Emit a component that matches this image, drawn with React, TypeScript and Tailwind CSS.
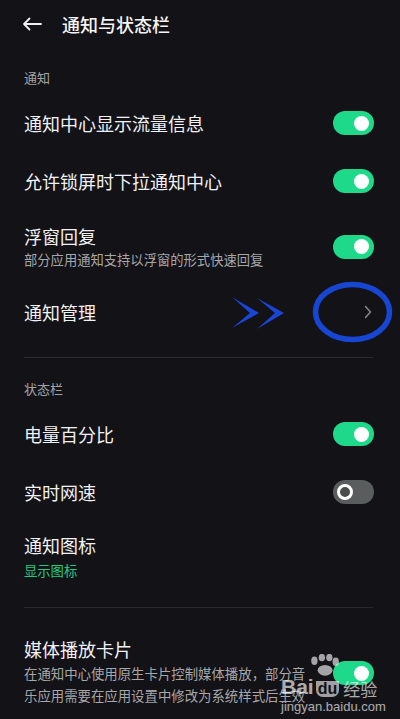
import React from "react";

const font = { fontFamily: '"Noto Sans CJK SC", "Noto Sans", sans-serif' };

function Toggle({ on }: { on: boolean }) {
  if (on) {
    return (
      <div className="w-[41px] h-[24px] rounded-full bg-[#1fd98a] flex items-center justify-end pr-[5px] shrink-0">
        <div className="w-[15px] h-[15px] rounded-full bg-white" />
      </div>
    );
  }
  return (
    <div className="w-[41px] h-[24px] rounded-full bg-[#5a5d5d] flex items-center pl-[4px] shrink-0">
      <div className="w-[16px] h-[16px] rounded-full border-[3.5px] border-white bg-[#4a4c4c]" />
    </div>
  );
}

function SectionLabel({ text }: { text: string }) {
  return (
    <div className="h-[32px] flex items-center px-[24px] text-[13px] text-[#a3a3a6]">{text}</div>
  );
}

function Row({ title, sub, on }: { title: string; sub?: string; on: boolean }) {
  return (
    <div className={`${sub ? "h-[73px]" : "h-[58px]"} flex items-center justify-between pl-[24px] pr-[26px]`}>
      <div className="flex flex-col">
        <span className="text-[18px] leading-[24px] text-[#f1f1f3]">{title}</span>
        {sub && <span className="mt-[2px] text-[13.3px] leading-[20px] text-[#a7a7aa]">{sub}</span>}
      </div>
      <Toggle on={on} />
    </div>
  );
}

function Divider() {
  return <div className="ml-[24px] mr-[27px] h-px bg-[#2a2a30]" />;
}

export default function App() {
  return (
    <div className="relative w-[400px] h-[719px] overflow-hidden bg-[#131217]" style={font}>
      <div className="h-[48px] flex items-center pl-[22px]">
        <svg width="20" height="14" viewBox="0 0 20 14" fill="none" stroke="#f1f1f3" strokeWidth="1.8" strokeLinecap="round" strokeLinejoin="round">
          <path d="M19 7H2M7.5 1.5L2 7l5.5 5.5" />
        </svg>
        <span className="ml-[20px] text-[18px] font-medium text-[#f4f4f6]">通知与状态栏</span>
      </div>

      <div className="mt-[14px]">
        <SectionLabel text="通知" />
      </div>
      <Row title="通知中心显示流量信息" on />
      <Row title="允许锁屏时下拉通知中心" on />
      <Row title="浮窗回复" sub="部分应用通知支持以浮窗的形式快速回复" on />
      <div className="h-[58px] flex items-center justify-between pl-[24px] pr-[28px]">
        <span className="text-[18px] leading-[24px] text-[#f1f1f3]">通知管理</span>
        <svg width="8" height="14" viewBox="0 0 8 14" fill="none" stroke="#8c8c90" strokeWidth="1.4" strokeLinecap="round" strokeLinejoin="round">
          <path d="M1.5 1.5L6.5 7l-5 5.5" />
        </svg>
      </div>

      <div className="mt-[16px]">
        <Divider />
      </div>
      <div className="mt-[15px]">
        <SectionLabel text="状态栏" />
      </div>
      <Row title="电量百分比" on />
      <Row title="实时网速" on={false} />
      <div className="h-[74px] pt-[12px] pl-[24px] pr-[26px] flex flex-col">
        <span className="text-[18px] leading-[24px] text-[#f1f1f3]">通知图标</span>
        <span className="mt-[4px] text-[13.3px] leading-[20px] text-[#22c983]">显示图标</span>
      </div>

      <div className="mt-[12px]">
        <Divider />
      </div>
      <div className="mt-[28px] flex items-center justify-between pl-[24px] pr-[26px]">
        <div className="flex flex-col w-[290px]">
          <span className="text-[18px] leading-[26px] text-[#f1f1f3]">媒体播放卡片</span>
          <span className="text-[13.4px] leading-[22px] text-[#a7a7aa]">
            在通知中心使用原生卡片控制媒体播放，部分音乐应用需要在应用设置中修改为系统样式后生效
          </span>
        </div>
        <div className="mt-[4px]">
          <Toggle on />
        </div>
      </div>

      {/* annotation overlay */}
      <svg className="absolute left-0 top-0 pointer-events-none" width="400" height="719" viewBox="0 0 400 719">
        <path d="M232 297L259 313L232 328L250 313Z" fill="#1b45d8" />
        <path d="M257 298L284 313L257 329L275 313Z" fill="#1b45d8" />
        <ellipse cx="352.5" cy="312" rx="37" ry="27.5" fill="none" stroke="#1747d2" strokeWidth="5.5" />
      </svg>

      {/* watermark */}
      <div className="absolute left-[281px] top-[654px] pointer-events-none">
        <div className="relative h-[22px]">
          <svg className="absolute left-[27px] top-[0px]" width="32" height="22" viewBox="0 0 30 20" fill="rgba(255,255,255,0.62)">
            <ellipse cx="6" cy="6" rx="3" ry="4" />
            <ellipse cx="13" cy="3" rx="3" ry="3.5" />
            <ellipse cx="20" cy="3" rx="3" ry="3.5" />
            <ellipse cx="26" cy="7" rx="3" ry="4" />
            <ellipse cx="16" cy="15" rx="7" ry="5" />
          </svg>
        </div>
        <div className="flex items-end leading-none" style={{ fontFamily: '"Liberation Sans", "Noto Sans CJK SC", sans-serif' }}>
          <span className="text-[21px] font-bold text-white/65">Bai</span>
          <span className="ml-[2px] px-[2px] text-[16px] font-bold text-[#131217] bg-white/60 rounded-b-[7px]">du</span>
          <span className="ml-[4px] text-[17px] text-white/65" style={font}>经验</span>
        </div>
        <div className="mt-[3px] text-[13px] leading-none text-white/65" style={{ fontFamily: '"Liberation Sans", sans-serif' }}>
          jingyan.baidu.com
        </div>
      </div>
    </div>
  );
}
